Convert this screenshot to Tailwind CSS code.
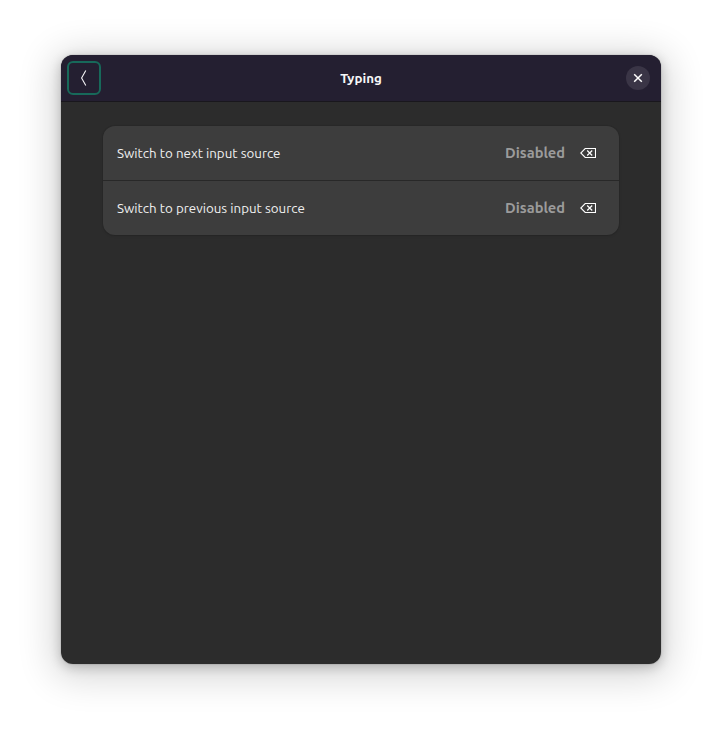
<!DOCTYPE html>
<html lang="en">
<head>
<meta charset="utf-8">
<title>Typing</title>
<script src="https://cdn.jsdelivr.net/npm/@tailwindcss/browser@4"></script>
</head>
<body class="h-[731px] w-[722px] overflow-hidden bg-white px-[61px] pt-[55px] font-['Ubuntu','Noto_Sans',sans-serif] text-[13.333px]">
<main class="flex h-[609px] w-[600px] flex-col overflow-hidden rounded-xl bg-[#2c2c2c] shadow-[0_3px_12px_rgba(0,0,0,0.22),0_6px_36px_8px_rgba(0,0,0,0.16),0_0_0_1px_rgba(0,0,0,0.06)]">
  <header class="grid h-[47px] shrink-0 grid-cols-[34px_1fr_34px] items-center border-b border-[#19171d] bg-[#241f31] pr-[11px] pl-1.5">
    <button class="flex size-[34px] items-center justify-center rounded-md border-2 border-[#17695a]" aria-label="Back">
      <svg class="size-4" viewBox="0 0 16 16" fill="none" stroke="#f4f3f5" stroke-width="1.1"><path d="M9.8 .6 5.6 8 9.8 15.4"/></svg>
    </button>
    <h1 class="pt-0.5 pl-[5px] text-center text-[13.333px] leading-5 font-bold text-[#f7f7f8]">Typing</h1>
    <button class="ml-auto flex size-6 items-center justify-center rounded-full bg-[#3a3546]" aria-label="Close">
      <svg class="size-4" viewBox="0 0 16 16" fill="none" stroke="#fff" stroke-width="1.5"><path d="m4.2 4.2 7.6 7.6m0-7.6-7.6 7.6"/></svg>
    </button>
  </header>
  <section class="mx-[42px] mt-6 overflow-hidden rounded-xl bg-[#3d3d3d] shadow-[0_1px_3px_rgba(0,0,0,0.12),0_0_0_1px_rgba(0,0,0,0.05)]">
    <div class="flex h-[55px] items-center border-b border-[#282828] pr-[23px] pl-3.5">
      <span class="flex-1 pt-px tracking-[0.02px] text-[#f0f0f0]">Switch to next input source</span>
      <span class="mr-[15px] w-[60px] text-[14.667px] font-semibold whitespace-nowrap text-[#9b9b9b]">Disabled</span>
      <svg class="size-4" viewBox="0 0 16 16" fill="none" stroke="#fff" stroke-width="1.1"><path d="M5.2 3.5h10.3v9H5.2L.8 8z"/><path d="m7.2 5.5 5 5m0-5-5 5" stroke-width="1.25"/></svg>
    </div>
    <div class="flex h-[54px] items-center pr-[23px] pl-3.5">
      <span class="flex-1 pt-px tracking-[0.02px] text-[#f0f0f0]">Switch to previous input source</span>
      <span class="mr-[15px] w-[60px] text-[14.667px] font-semibold whitespace-nowrap text-[#9b9b9b]">Disabled</span>
      <svg class="size-4" viewBox="0 0 16 16" fill="none" stroke="#fff" stroke-width="1.1"><path d="M5.2 3.5h10.3v9H5.2L.8 8z"/><path d="m7.2 5.5 5 5m0-5-5 5" stroke-width="1.25"/></svg>
    </div>
  </section>
</main>
</body>
</html>
